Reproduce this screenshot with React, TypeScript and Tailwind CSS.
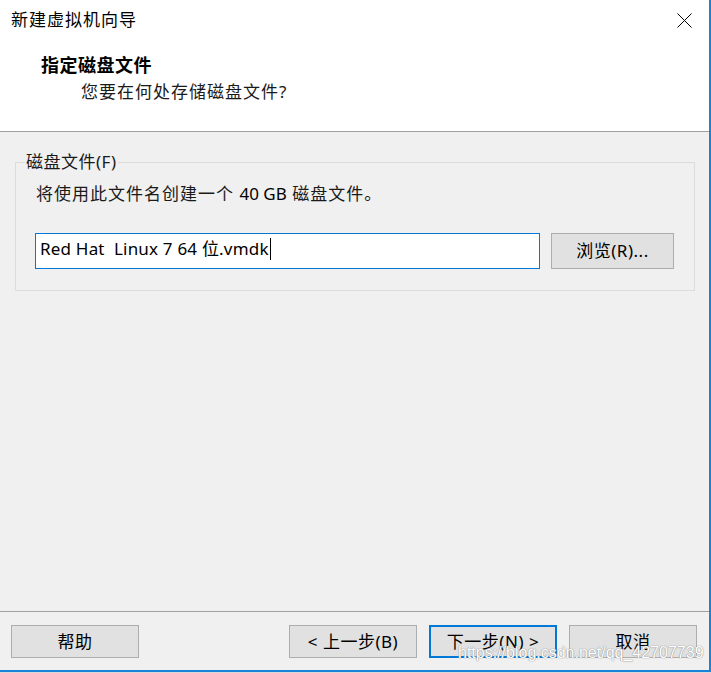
import React from 'react';

const cjk = "font-['Noto_Sans','Noto_Sans_CJK_SC',sans-serif]";

function DialogButton({ label, primary = false }: { label: string; primary?: boolean }) {
  return (
    <button
      type="button"
      className={`w-[128px] h-[33px] bg-[#e1e1e1] text-[17px] tracking-[0.5px] leading-none text-black ${
        primary ? 'border-2 border-[#0078d7]' : 'border border-[#adadad]'
      }`}
    >
      {label}
    </button>
  );
}

export default function App() {
  return (
    <div className={`relative w-[711px] h-[673px] bg-[#d9d9d9] ${cjk}`}>
      <div className="w-[711px] h-[672px] border-r-2 border-b-2 border-[#1883d7] bg-[#f0f0f0] flex flex-col">
        {/* header */}
        <div className="h-[132px] bg-white border-b border-[#a0a0a0] flex flex-col">
          <div className="h-[40px] flex items-center justify-between pl-[11px] pr-[17px]">
            <span className="text-[17px] tracking-[1px] leading-[20px] text-black">新建虚拟机向导</span>
            <svg width="15" height="15" viewBox="0 0 15 15" className="text-black">
              <path d="M0.5 0.5 L14.5 14.5 M14.5 0.5 L0.5 14.5" stroke="currentColor" strokeWidth="1" fill="none" />
            </svg>
          </div>
          <div className="mt-[15px] pl-[41px] text-[18px] tracking-[0.5px] leading-[20px] font-bold text-black">指定磁盘文件</div>
          <div className="mt-[7px] pl-[81px] text-[17px] tracking-[1px] leading-[20px] text-[#1a1a1a]">您要在何处存储磁盘文件?</div>
        </div>

        {/* body */}
        <div className="flex-1 pt-[20px] pl-[15px]">
          <fieldset className="w-[680px] border border-[#dcdcdc] pb-[21px]">
            <legend className="ml-[9px] px-[1px] text-[17px] tracking-[0.5px] leading-[20px] text-[#1a1a1a]">磁盘文件(F)</legend>
            <div className="pl-[19px] pr-[20px]">
              <div className="pt-[12px] pl-[1px] text-[17px] tracking-[1px] leading-[20px] text-[#1a1a1a]">
                将使用此文件名创建一个 <span className="text-black tracking-normal">40 GB</span> 磁盘文件。
              </div>
              <div className="mt-[29px] flex gap-[11px]">
                <div className="w-[505px] h-[36px] bg-white border border-[#0078d7] flex items-center pl-[4px] pb-[4px] text-[17px] tracking-[0.2px] text-black">
                  Red Hat&nbsp; Linux 7 64 位.vmdk
                  <span className="ml-px inline-block w-px h-[22px] bg-black" />
                </div>
                <button
                  type="button"
                  className="w-[123px] h-[36px] bg-[#e1e1e1] border border-[#adadad] text-[17px] tracking-[0.5px] text-black"
                >
                  浏览(R)...
                </button>
              </div>
            </div>
          </fieldset>
        </div>

        {/* footer */}
        <div className="border-t border-[#a0a0a0] pt-[13px] pb-[12px] pl-[11px] pr-[12px] flex">
          <DialogButton label="帮助" />
          <div className="flex-1" />
          <div className="flex gap-[12px]">
            <DialogButton label="< 上一步(B)" />
            <DialogButton label="下一步(N) >" primary />
            <DialogButton label="取消" />
          </div>
        </div>
      </div>

      {/* watermark */}
      <div className="absolute left-[458px] top-[643px] font-['Liberation_Sans',sans-serif] text-[16px] leading-[20px] text-white [text-shadow:0_0_1px_#8a8a8a,0_0_1px_#8a8a8a] pointer-events-none">
        https://blog.csdn.net/qq_42707739
      </div>
    </div>
  );
}
